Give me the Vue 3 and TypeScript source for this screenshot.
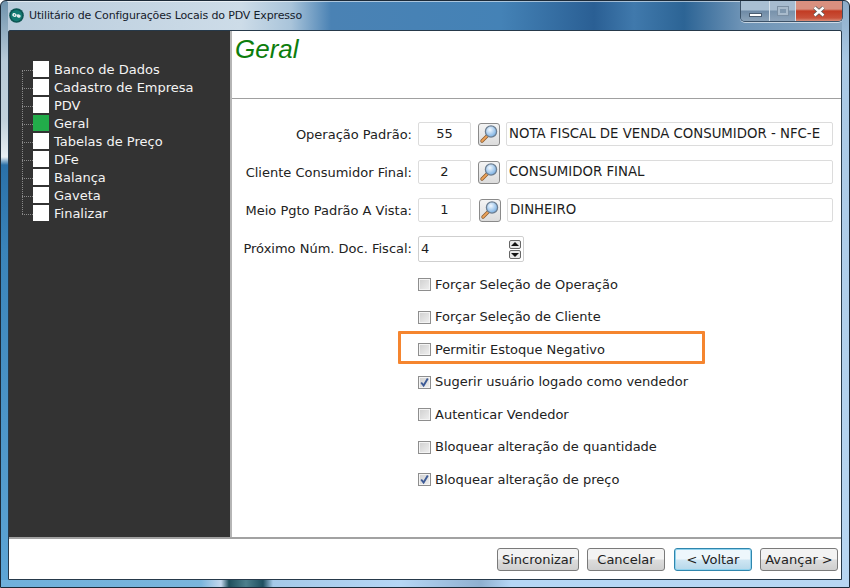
<script setup lang="ts">
const steps: string[] = ['Banco de Dados', 'Cadastro de Empresa', 'PDV', 'Geral', 'Tabelas de Preço', 'DFe', 'Balança', 'Gaveta', 'Finalizar']
const lookups = [
  { label: 'Operação Padrão:', code: '55', text: 'NOTA FISCAL DE VENDA CONSUMIDOR - NFC-E', shift: false },
  { label: 'Cliente Consumidor Final:', code: '2', text: 'CONSUMIDOR FINAL', shift: false },
  { label: 'Meio Pgto Padrão A Vista:', code: '1', text: 'DINHEIRO', shift: true },
]
const checks = [
  { label: 'Forçar Seleção de Operação', on: false, mark: false },
  { label: 'Forçar Seleção de Cliente', on: false, mark: false },
  { label: 'Permitir Estoque Negativo', on: false, mark: true },
  { label: 'Sugerir usuário logado como vendedor', on: true, mark: false },
  { label: 'Autenticar Vendedor', on: false, mark: false },
  { label: 'Bloquear alteração de quantidade', on: false, mark: false },
  { label: 'Bloquear alteração de preço', on: true, mark: false },
]
const buttons = ['Sincronizar', 'Cancelar', '< Voltar', 'Avançar >']
</script>

<template>
  <div class="window">
    <header class="titlebar">
      <svg class="app-icon" width="15" height="15" viewBox="0 0 16 16">
        <circle cx="8" cy="8" r="7.8" fill="#0d5654" />
        <circle cx="8" cy="8" r="6" fill="#127a72" />
        <g transform="rotate(15 8 8)">
          <ellipse cx="5.8" cy="8" rx="2.4" ry="2" fill="#f6f9f9" />
          <ellipse cx="10.4" cy="8" rx="2.2" ry="1.8" fill="#e4eeee" />
          <circle cx="5.8" cy="8" r="0.8" fill="#17807a" />
        </g>
      </svg>
      <span class="title">Utilitário de Configurações Locais do PDV Expresso</span>
      <div class="caption">
        <div class="cap cap-min"><span class="min-glyph"></span></div>
        <div class="cap cap-max"><span class="max-glyph"></span></div>
        <div class="cap cap-close">
          <svg width="14" height="11" viewBox="0 0 14 11">
            <path d="M2.5 1.5 L11.5 9.5 M11.5 1.5 L2.5 9.5" stroke="#5a5a5a" stroke-width="4" fill="none" />
            <path d="M2.5 1.5 L11.5 9.5 M11.5 1.5 L2.5 9.5" stroke="#ffffff" stroke-width="2.4" fill="none" />
          </svg>
        </div>
      </div>
    </header>

    <div class="client">
      <div class="main">
        <aside class="side">
          <ul class="tree">
            <li v-for="s in steps" :key="s" class="node">
              <span class="dash"></span>
              <span class="square" :class="{ current: s === 'Geral' }"></span>
              <span class="node-label">{{ s }}</span>
            </li>
          </ul>
        </aside>
        <section class="content">
          <div class="heading"><h1>Geral</h1></div>
          <div class="form">
            <div v-for="r in lookups" :key="r.label" class="row">
              <label class="lbl">{{ r.label }}</label>
              <div class="field code">{{ r.code }}</div>
              <button class="search" :class="{ shifted: r.shift }">
                <svg width="20" height="20" viewBox="0 0 20 20">
                  <defs>
                    <radialGradient id="lens" cx="0.4" cy="0.35" r="0.8">
                      <stop offset="0" stop-color="#f2f9ff" />
                      <stop offset="1" stop-color="#5f9fdc" />
                    </radialGradient>
                  </defs>
                  <path d="M8.5 11.5 L3 17" stroke="#8a5a2c" stroke-width="3.4" stroke-linecap="round" />
                  <path d="M8.5 11.5 L3 17" stroke="#eda35a" stroke-width="1.8" stroke-linecap="round" />
                  <circle cx="12" cy="7.5" r="5.6" fill="url(#lens)" stroke="#6d7f92" stroke-width="1.3" />
                </svg>
              </button>
              <div class="field desc" :class="{ shifted: r.shift }">{{ r.text }}</div>
            </div>
            <div class="row spin-row">
              <label class="lbl">Próximo Núm. Doc. Fiscal:</label>
              <div class="field spin">
                <span>4</span>
                <span class="arrows">
                  <i class="arrow up"></i>
                  <i class="arrow down"></i>
                </span>
              </div>
            </div>
            <div class="checks">
              <div v-for="c in checks" :key="c.label" class="check" :class="{ marked: c.mark }">
                <span class="box">
                  <svg v-if="c.on" width="11" height="11" viewBox="0 0 11 11">
                    <path d="M2.2 5.5 L4.6 8.6 L8.8 1.6" stroke="#3c5a96" stroke-width="1.9" fill="none" />
                  </svg>
                </span>
                <span>{{ c.label }}</span>
                <span v-if="c.mark" class="highlight"></span>
              </div>
            </div>
          </div>
        </section>
      </div>
      <footer class="footer">
        <button
          v-for="b in buttons"
          :key="b"
          class="btn"
          :class="{ wide: b === 'Sincronizar', focus: b === '< Voltar' }"
        >{{ b }}</button>
      </footer>
    </div>
  </div>
</template>

<style>
html, body { margin: 0; padding: 0; overflow: hidden; }
</style>

<style scoped>
.window {
  width: 850px;
  height: 588px;
  box-sizing: border-box;
  display: flex;
  flex-direction: column;
  padding: 0 7px 7px 7px;
  border: 1px solid #1c2a38;
  border-radius: 6px 6px 0 0;
  margin: 0;
  background:
    linear-gradient(90deg, #6fb0db 0, #7ab5dc 200px, #c4d8ee 220px, #1f4f5c 228px, #4d7f8c 245px, #1f5060 262px, #a5c9e8 272px, #b5d6f5 400px, #8fb0d0 480px, #b5d6f5 510px, #b8d6f2 100%) left bottom / 100% 7px no-repeat,
    linear-gradient(#6f93ad 0, #b7cad8 60px, #c2d2dc 120px, #e8eff4 156px, #2a70a8 164px, #3a84ba 250px, #5ea6d6 100%) left top / 7px 100% no-repeat,
    linear-gradient(#8cacc8 0, #a9c8e4 60px, #b7d6f2 100%) right top / 7px 100% no-repeat,
    linear-gradient(90deg, #b9ccdc 0, #cddce8 240px, #a9c4da 290px, #4a82b4 330px, #4482b6 500px, #2a5f94 593px, #4079ac 633px, #2c6495 683px, #6d93b6 740px, #8aa8c2 100%);
  font-family: "DejaVu Sans", Verdana, sans-serif;
  font-size: 13px;
  color: #222;
  overflow: hidden;
}
.titlebar {
  height: 29px;
  flex: none;
  display: flex;
  align-items: flex-start;
  position: relative;
  margin: 0 -1px;
  box-shadow: inset 0 1px 0 rgba(255,255,255,.55);
}
.app-icon { margin: 7px 0 0 2px; flex: none; }
.title {
  margin: 7px 0 0 5px;
  font-family: "DejaVu Sans", sans-serif;
  font-size: 11px;
  line-height: 16px;
  color: #15202b;
  letter-spacing: -0.15px;
}
.caption {
  margin-left: auto;
  margin-right: 0;
  display: flex;
  height: 20px;
  border: 1px solid #3c5268;
  border-top: 0;
  border-radius: 0 0 5px 5px;
  overflow: hidden;
  box-shadow: 0 1px 0 rgba(255,255,255,.6);
}
.cap {
  display: flex;
  align-items: center;
  justify-content: center;
  height: 20px;
  box-sizing: border-box;
}
.cap-min {
  width: 29px;
  background: linear-gradient(#a9bfd3 0 45%, #6e8aa6 50%, #8ba2b8);
  border-right: 1px solid #d5e0ea;
}
.cap-max {
  width: 26px;
  background: linear-gradient(#a6bbcf 0 45%, #7892ab 50%, #8ea4ba);
  border-right: 1px solid #d5e0ea;
}
.cap-close {
  width: 46px;
  background: linear-gradient(#d9907f 0 40%, #c23b23 50%, #c9513a 85%, #da8f7a);
}
.min-glyph {
  width: 11px;
  background: #fff;
  margin-top: 7px;
  border: 1px solid #4a5c70;
  box-sizing: content-box;
  height: 2px;
}
.max-glyph {
  width: 6px;
  height: 4px;
  border: 2px solid #a9bbcc;
  outline: 1px solid #7b8fa3;
  background: #7f97ae;
}
.client {
  flex: 1;
  min-height: 0;
  display: flex;
  flex-direction: column;
  background: #fff;
  border: 1px solid #26394a;
  border-radius: 2px 2px 0 0;
}
.main {
  flex: 1;
  min-height: 0;
  display: flex;
  border-bottom: 2px solid #a2a2a2;
}
.side {
  width: 221px;
  flex: none;
  background: #333333;
  border-right: 2px solid #b5b5b5;
  box-sizing: content-box;
  padding-top: 30px;
}
.tree {
  list-style: none;
  margin: 0;
  padding: 0 0 0 13px;
  position: relative;
}
.tree::before {
  content: "";
  position: absolute;
  left: 13px;
  top: 9px;
  bottom: 9px;
  border-left: 1px dotted #8a8a8a;
}
.node {
  display: flex;
  align-items: center;
  height: 18px;
  color: #f4f4f4;
  line-height: 18px;
}
.dash { width: 11px; border-top: 1px dotted #8a8a8a; flex: none; }
.square {
  width: 16px;
  height: 16px;
  align-self: flex-start;
  background: #fff;
  flex: none;
}
.square.current { background: #22ac4a; }
.node-label { margin-left: 5px; white-space: nowrap; }
.content { flex: 1; min-width: 0; display: flex; flex-direction: column; }
.heading {
  height: 68px;
  box-sizing: border-box;
  border-bottom: 1px solid #a0a0a0;
  flex: none;
}
h1 {
  margin: 0;
  padding: 2px 0 0 3px;
  font-family: "Liberation Sans", Arial, sans-serif;
  font-style: italic;
  font-weight: 400;
  font-size: 26px;
  line-height: 32px;
  color: #0c7d0c;
}
.form { padding: 23px 8px 0 0; display: flex; flex-direction: column; }
.row {
  display: flex;
  align-items: center;
  height: 24px;
  margin-bottom: 14px;
}
.lbl {
  width: 180px;
  flex: none;
  text-align: right;
  margin-right: 6px;
  white-space: nowrap;
}
.field {
  box-sizing: border-box;
  height: 24px;
  background: #fff;
  border: 1px solid #dcdcdc;
  border-radius: 2px;
  line-height: 22px;
  color: #1c1c1c;
  white-space: nowrap;
}
.code { width: 53px; text-align: center; flex: none; }
.search {
  box-sizing: border-box;
  width: 22px;
  height: 23px;
  margin-left: 7px;
  padding: 0;
  flex: none;
  display: flex;
  align-items: center;
  justify-content: center;
  border: 1px solid #8a8a8a;
  border-radius: 3px;
  background: linear-gradient(#f4f4f4, #dcdcdc);
}
.search.shifted { margin-left: 8px; }
.desc { margin-left: 6px; width: 327px; padding-left: 2px; font-size: 13.3px; }
.desc.shifted { width: 326px; }
.spin-row { height: 26px; margin-bottom: 9px; }
.spin-row .lbl { margin-bottom: 2px; }
.spin {
  width: 106px;
  height: 26px;
  line-height: 24px;
  padding-left: 2px;
  display: flex;
  align-items: center;
  justify-content: space-between;
  border-color: #cfcfcf;
}
.arrows {
  display: flex;
  flex-direction: column;
  gap: 1px;
  margin-right: 2px;
}
.arrow {
  width: 12px;
  height: 9px;
  box-sizing: border-box;
  border: 1px solid #666;
  border-radius: 2px;
  background: #e8e8e8;
  position: relative;
  display: block;
}
.arrow::after {
  content: "";
  position: absolute;
  left: 1px;
  border-left: 4px solid transparent;
  border-right: 4px solid transparent;
}
.arrow.up::after { top: 1px; border-bottom: 4px solid #111; }
.arrow.down::after { top: 2px; border-top: 4px solid #111; }
.checks {
  display: flex;
  flex-direction: column;
  gap: 16.5px;
  padding-left: 186px;
  padding-top: 5.6px;
}
.check {
  position: relative;
  display: flex;
  align-items: center;
  height: 16px;
  line-height: 16px;
  white-space: nowrap;
}
.box {
  box-sizing: border-box;
  width: 13px;
  height: 13px;
  margin-right: 4px;
  flex: none;
  border: 1px solid #8e8e8e;
  background: linear-gradient(135deg, #cfcfcf, #f0f0f0);
  box-shadow: inset 0 0 0 1px #f4f4f4;
  display: flex;
  align-items: center;
  justify-content: center;
}
.highlight {
  position: absolute;
  left: -20px;
  top: -11px;
  width: 307px;
  height: 33px;
  box-sizing: border-box;
  border: 3px solid #f5852f;
  border-radius: 1px;
}
.footer {
  height: 40px;
  flex: none;
  box-sizing: border-box;
  padding: 9px 3px 0 0;
  display: flex;
  justify-content: flex-end;
  gap: 8px;
}
.btn {
  box-sizing: border-box;
  width: 78px;
  height: 23px;
  padding: 0;
  font-family: inherit;
  font-size: 13px;
  color: #222;
  border: 1px solid #7a7a7a;
  border-radius: 3px;
  background: linear-gradient(#f3f3f3 0 48%, #dddddd 52%, #cfcfcf);
  white-space: nowrap;
}
.btn.wide { width: 82px; }
.btn.focus {
  margin-left: 1px;
  border-color: #2f86ad;
  background: linear-gradient(#eef7fc 0 48%, #cfe6f3 52%, #b6d8ea);
  box-shadow: inset 0 0 0 1px #8fd2ee;
}
</style>
